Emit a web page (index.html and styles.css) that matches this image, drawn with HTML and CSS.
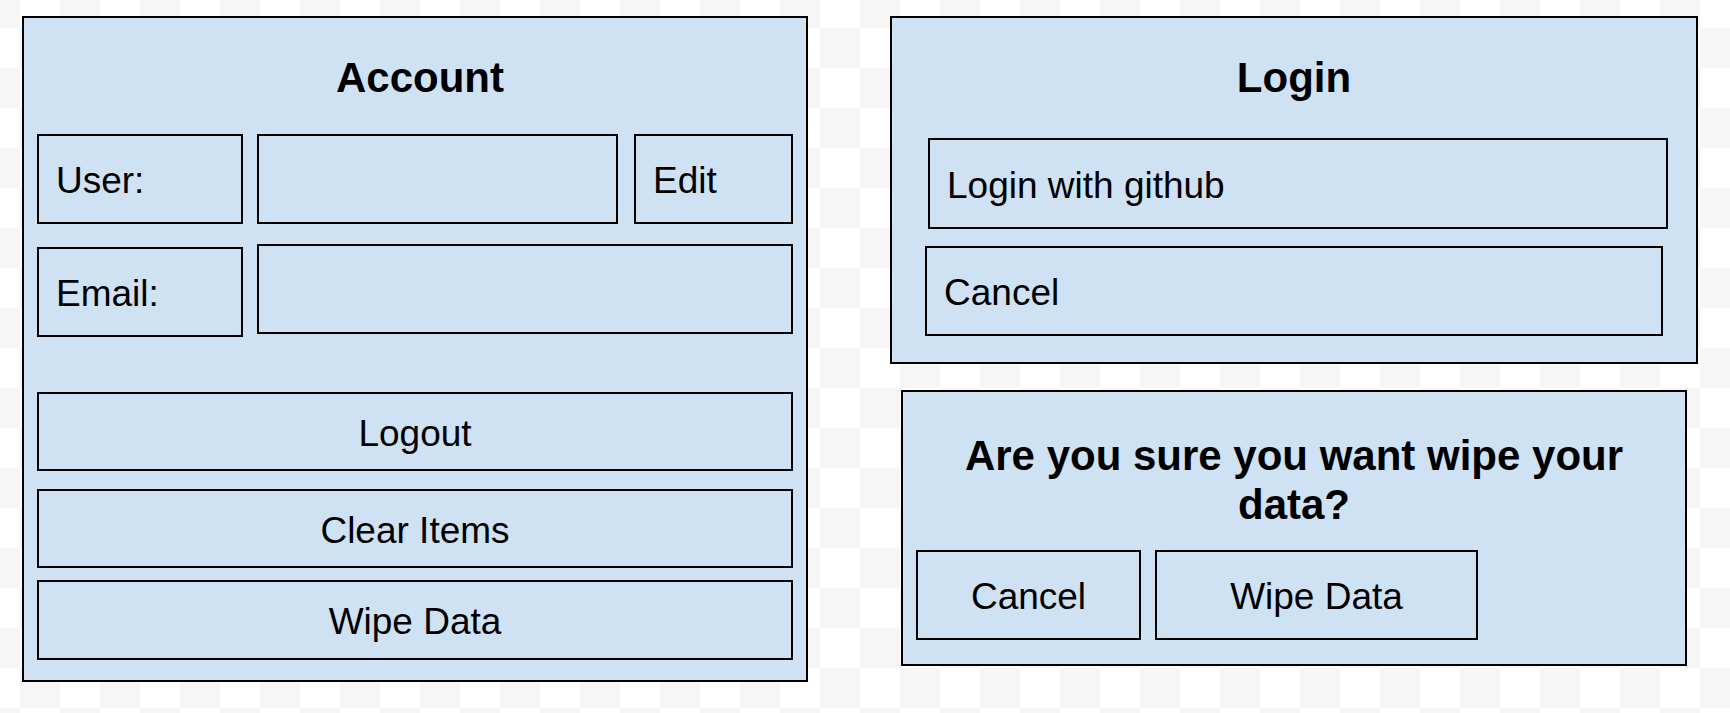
FILE: index.html
```html
<!DOCTYPE html>
<html lang="en">
<head>
<meta charset="utf-8">
<title>Account mockups</title>
<link rel="stylesheet" href="styles.css">
</head>
<body>
<div class="canvas">
  <section class="panel account">
    <h2 class="title account-title">Account</h2>
    <div class="row row-user">
      <div class="box field user-label">User:</div>
      <div class="box user-input"></div>
      <div class="box field edit">Edit</div>
    </div>
    <div class="row row-email">
      <div class="box field email-label">Email:</div>
      <div class="box email-input"></div>
    </div>
    <div class="box action logout">Logout</div>
    <div class="box action clear">Clear Items</div>
    <div class="box action wipe">Wipe Data</div>
  </section>
  <div class="right-col">
    <section class="panel login">
      <h2 class="title login-title">Login</h2>
      <div class="box field github">Login with github</div>
      <div class="box field login-cancel">Cancel</div>
    </section>
    <section class="panel confirm">
      <h2 class="title confirm-title">Are you sure you want wipe your data?</h2>
      <div class="row confirm-actions">
        <div class="box action confirm-cancel">Cancel</div>
        <div class="box action confirm-wipe">Wipe Data</div>
      </div>
    </section>
  </div>
</div>
</body>
</html>
```

FILE: styles.css
```css
html, body {
  margin: 0;
  height: 100%;
}

body {
  background-color: #ffffff;
  background-image: repeating-conic-gradient(#f6f6f6 0 25%, #ffffff 0 50%);
  background-size: 80px 80px;
  background-position: -20px 28px;
  font-family: "Liberation Sans", Arial, sans-serif;
  font-size: 37px;
  color: #000;
}

.canvas {
  display: flex;
  align-items: flex-start;
  padding: 16px 0 0 22px;
}

.panel {
  box-sizing: border-box;
  background: #cfe2f3;
  border: 2px solid #000;
}

.title {
  margin: 0;
  font-size: 42px;
  font-weight: bold;
  line-height: 48px;
  text-align: center;
}

.box {
  box-sizing: border-box;
  border: 2px solid #000;
  padding-top: 4px;
  display: flex;
  align-items: center;
  white-space: nowrap;
}

.field {
  padding-left: 17px;
}

.action {
  justify-content: center;
}

.row {
  display: flex;
  align-items: flex-start;
}

/* Account */
.account {
  width: 786px;
  height: 666px;
  padding: 0 13px;
}

.account-title {
  padding: 36px 0 0 10px;
  margin-bottom: 32px;
}

.row-user .box {
  height: 90px;
}

.user-label {
  width: 206px;
}

.user-input {
  width: 361px;
  margin-left: 14px;
}

.edit {
  width: 159px;
  margin-left: 16px;
}

.row-email {
  margin-top: 20px;
}

.email-label {
  width: 206px;
  height: 90px;
  margin-top: 3px;
}

.email-input {
  width: 536px;
  height: 90px;
  margin-left: 14px;
}

.logout {
  height: 79px;
  margin-top: 55px;
}

.clear {
  height: 79px;
  margin-top: 18px;
}

.wipe {
  height: 80px;
  margin-top: 12px;
}

/* Right column */
.right-col {
  display: flex;
  flex-direction: column;
  align-items: flex-start;
  margin-left: 82px;
}

.login {
  width: 808px;
  height: 348px;
}

.login-title {
  padding-top: 36px;
  margin-bottom: 36px;
}

.github {
  width: 740px;
  height: 91px;
  margin-left: 36px;
}

.login-cancel {
  width: 738px;
  height: 90px;
  margin-left: 33px;
  margin-top: 17px;
}

.confirm {
  width: 786px;
  height: 276px;
  margin: 26px 0 0 11px;
}

.confirm-title {
  padding: 39px 13px 0;
  line-height: 49px;
  margin-bottom: 21px;
}

.confirm-actions {
  padding-left: 13px;
}

.confirm-actions .box {
  height: 90px;
}

.confirm-cancel {
  width: 225px;
}

.confirm-wipe {
  width: 323px;
  margin-left: 14px;
}
```
